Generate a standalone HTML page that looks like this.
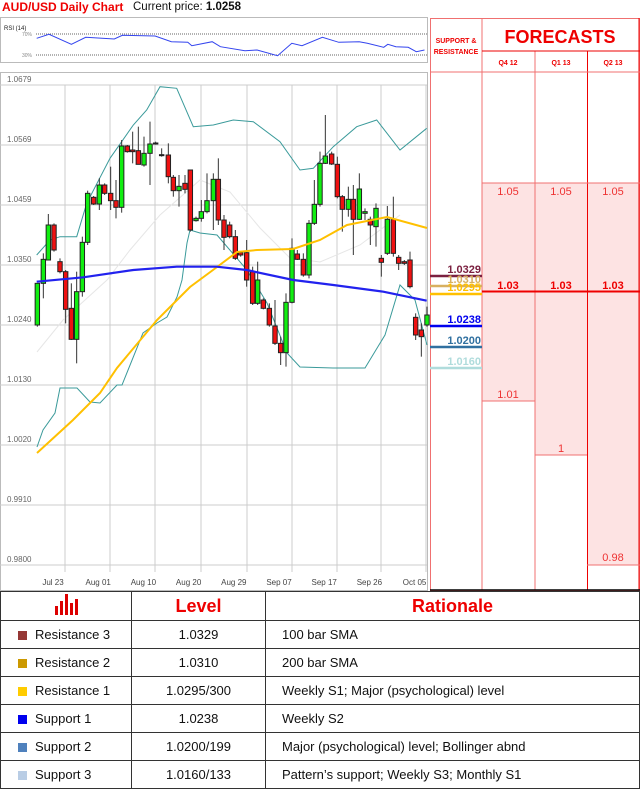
<!DOCTYPE html>
<html><head><meta charset="utf-8"><style>
body{margin:0;width:640px;height:788px;overflow:hidden;background:#fff;font-family:"Liberation Sans",sans-serif;position:relative}
.a{position:absolute}
table{border-collapse:collapse;position:absolute;left:0;top:591px;width:640px;table-layout:fixed}
td{border:1px solid #333;height:28px;padding:0;font-size:13px;color:#111;box-sizing:border-box}
th{border:1px solid #333;height:29px;padding:0;color:#e00;font-size:18px;font-weight:bold;box-sizing:border-box}
.sq{display:inline-block;width:9px;height:9px;margin:0 8px 0 17px;vertical-align:-1px}
</style></head><body>
<div class="a" style="left:2px;top:0;font-size:12px;font-weight:bold;color:#e00">AUD/USD Daily Chart</div>
<div class="a" style="left:133px;top:1px;font-size:11.5px;color:#111">Current price: <b>1.0258</b></div>
<svg id="s" class="a" style="left:0;top:0" width="640" height="592" xmlns="http://www.w3.org/2000/svg"></svg>
<table>
<colgroup><col style="width:131px"><col style="width:134px"><col></colgroup>
<tr><th><svg width="26" height="22"><g fill="#d00"><rect x="2" y="13" width="3" height="9"/><rect x="7" y="8" width="3" height="14"/><rect x="12" y="1" width="3" height="21"/><rect x="17" y="10" width="3" height="12"/><rect x="22" y="6" width="3" height="16"/></g></svg></th><th>Level</th><th>Rationale</th></tr>
<tr><td><span class="sq" style="background:#953735"></span>Resistance 3</td><td align="center">1.0329</td><td style="padding-left:16px">100 bar SMA</td></tr>
<tr><td><span class="sq" style="background:#cc9900"></span>Resistance 2</td><td align="center">1.0310</td><td style="padding-left:16px">200 bar SMA</td></tr>
<tr><td><span class="sq" style="background:#ffcc00"></span>Resistance 1</td><td align="center">1.0295/300</td><td style="padding-left:16px">Weekly S1; Major (psychological) level</td></tr>
<tr><td><span class="sq" style="background:#0000ee"></span>Support 1</td><td align="center">1.0238</td><td style="padding-left:16px">Weekly S2</td></tr>
<tr><td><span class="sq" style="background:#4f81bd"></span>Support 2</td><td align="center">1.0200/199</td><td style="padding-left:16px">Major (psychological) level; Bollinger abnd</td></tr>
<tr><td><span class="sq" style="background:#b9cde5"></span>Support 3</td><td align="center">1.0160/133</td><td style="padding-left:16px">Pattern’s support; Weekly S3; Monthly S1</td></tr>
</table>
<script>
var s='';
function L(x1,y1,x2,y2,c,w){s+='<line x1="'+x1+'" y1="'+y1+'" x2="'+x2+'" y2="'+y2+'" stroke="'+c+'" stroke-width="'+(w||1)+'"/>';}
function R(x,y,w,h,f,st){s+='<rect x="'+x+'" y="'+y+'" width="'+w+'" height="'+h+'" fill="'+f+'" '+(st?'stroke="'+st+'"':'')+'/>';}
function T(x,y,t,c,sz,a,b){s+='<text x="'+x+'" y="'+y+'" fill="'+c+'" font-size="'+sz+'" text-anchor="'+(a||'start')+'" font-weight="'+(b?'bold':'normal')+'" font-family="Liberation Sans">'+t+'</text>';}
function P(pts,c,w,sx,sy,ox,oy){var d=pts.map(function(p,i){return (i?'L':'M')+(p[0]/(sx||1)+(ox||0)).toFixed(1)+' '+(p[1]/(sy||1)+(oy||0)).toFixed(1)}).join(' ');s+='<path d="'+d+'" fill="none" stroke="'+c+'" stroke-width="'+w+'"/>';}
// RSI box
R(0.5,17.5,427,45,'#fff','#bbb');
T(4,30,'RSI (14)','#222',6);T(22,36,'70%','#888',5);T(22,57,'30%','#888',5);
s+='<line x1="36" y1="34" x2="427" y2="34" stroke="#666" stroke-dasharray="1,1"/><line x1="36" y1="55" x2="427" y2="55" stroke="#666" stroke-dasharray="1,1"/>';
P([[90,115],[120,103],[175,133],[210,112],[280,117],[300,106],[380,108],[420,125],[460,127],[470,137],[520,125],[540,140],[600,152],[630,150],[680,167],[715,130],[740,137],[790,112],[830,127],[880,125],[900,130],[940,142],[950,133],[970,140],[1000,142],[1020,155],[1040,150]],'#3344ee',1,2.45,3,0,0);
// main chart
R(0.5,72.5,427,518,'#fff','#bbb');
var lv=['1.0679','1.0569','1.0459','1.0350','1.0240','1.0130','1.0020','0.9910','0.9800'];
for(var i=0;i<9;i++){var y=85+i*60;L(0,y,427,y,'#ccc');T(7,y-3,lv[i],'#666',8);}
[65,110,155,201,247,292,337,381,426].forEach(function(x){L(x,85,x,572,'#ccc');});
var dl=['Jul 23','Aug 01','Aug 10','Aug 20','Aug 29','Sep 07','Sep 17','Sep 26','Oct 05'];
dl.forEach(function(d,i){T(53+i*45.2,585,d,'#444',8,'middle');});
P([[37,352],[63,320],[107,280],[130,250],[160,215],[200,180],[230,192],[260,228],[290,258],[320,262],[360,245],[400,215]],'#e6e6e6',1);
P([[110,555],[150,510],[180,500],[230,500],[260,400],[330,265],[400,165],[440,120],[480,50],[530,55],[580,170],[640,165],[700,150],[760,155],[840,215],[900,300],[940,295],[1000,230],[1070,170],[1130,150],[1200,240],[1280,175]],'#3a9a9a',1,3,3,0,70);
P([[37,447],[43,430],[55,413],[60,388],[77,388],[90,402],[100,403],[117,385],[122,385],[143,333],[157,323],[167,317],[177,297],[182,280],[187,243],[190,230],[200,233],[217,235],[247,270],[267,303],[287,353],[300,367],[333,368],[365,368],[385,335],[400,285],[415,300],[427,345]],'#3a9a9a',1);
var c=[[112,'g',640,765,640,770],[130,'g',568,640,550,685],[145,'g',465,570,432,570],[162,'r',465,540,460,545],[180,'r',575,605,565,610],[197,'r',605,718,600,760],[214,'r',715,808,640,810],[230,'g',665,808,605,880],[247,'g',517,665,500,680],[263,'g',370,517,362,525],[281,'r',382,402,378,405],[298,'g',345,402,325,420],[314,'r',345,370,340,375],[332,'r',370,392,290,420],[348,'r',392,412,330,445],[365,'g',228,412,210,428],[382,'r',228,245,225,248],[398,'r',240,245,185,280],[415,'r',242,283,170,283],[432,'g',250,285,200,290],[450,'g',222,250,155,345],[467,'g',219,222,215,224],[485,'g',254,256,235,260],[505,'r',255,320,220,340],[520,'r',322,362,315,380],[537,'g',349,362,315,410],[555,'r',340,358,315,370],[571,'r',300,480,300,485],[588,'g',445,452,440,455],[604,'g',425,445,390,455],[621,'g',392,425,310,430],[640,'g',328,392,310,480],[655,'r',328,450,265,465],[672,'r',450,502,435,540],[689,'r',465,500,455,505],[706,'r',500,565,480,570],[722,'r',548,555,545,560],[740,'r',548,630,510,650],[758,'r',605,700,590,705],[773,'g',630,700,575,705],[790,'r',690,715,685,718],[808,'r',715,765,700,770],[825,'r',768,820,690,825],[842,'r',820,848,800,885],[858,'g',697,848,670,890],[876,'g',535,697,505,700],[892,'r',552,568,540,570],[910,'r',568,615,550,620],[927,'g',460,615,450,625],[943,'g',403,460,330,465],[960,'g',280,403,245,410],[976,'g',258,280,135,282],[995,'r',252,282,245,285],[1012,'r',283,380,260,385],[1027,'r',380,418,375,485],[1045,'g',388,418,350,440],[1060,'r',388,448,345,555],[1078,'g',357,448,310,450],[1095,'g',425,430,415,450],[1111,'r',448,465,440,525],[1128,'g',415,470,400,530],[1144,'r',565,577,555,620],[1162,'g',448,550,408,555],[1180,'r',448,550,380,560],[1196,'r',562,580,555,600],[1213,'r',575,580,570,585],[1230,'r',570,650,545,655],[1247,'r',742,795,730,810],[1264,'r',780,800,760,860],[1281,'g',735,765,710,770]];
c.forEach(function(k){var x=k[0]/3,t=k[2]/3+70,b=k[3]/3+70;L(x,k[4]/3+70,x,k[5]/3+70,'#333');R(x-2.2,t,4.4,Math.max(b-t,1),k[1]=='g'?'#11ee11':'#ee1111','#222');});
P([[37,453],[73,420],[100,393],[117,368],[157,320],[190,287],[213,270],[237,252],[257,250],[293,249],[320,240],[347,225],[387,217],[427,228]],'#ffc000',2);
P([[110,635],[250,622],[400,600],[530,590],[650,590],[740,600],[880,630],[1000,645],[1150,665],[1280,692]],'#2222ee',2.2,3,3,0,70);
var pk='#fde3e3',bd='#f07070';
R(482,183,53,218,pk);R(535,183,52,272,pk);R(587,183,52,382,pk);
s+='<rect x="430.5" y="18.5" width="209" height="572" fill="none" stroke="'+bd+'"/>';
L(482,18,482,590,bd);L(535,51,535,590,bd);L(587.5,51,587.5,590,'#e00');L(639,18,639,590,'#e00');
L(482,51,640,51,'#e00');L(430,72,640,72,bd);L(482,183,640,183,bd);
L(482,401,535,401,bd);L(535,455,587,455,bd);L(587,565,640,565,bd);L(430,590,640,590,'#000',1.5);
T(456,43,'SUPPORT &amp;','#e00',7,'middle',1);T(456,54,'RESISTANCE','#e00',7,'middle',1);
T(560,43,'FORECASTS','#ee0000',18,'middle',1);
T(508,65,'Q4 12','#e00',7,'middle',1);T(561,65,'Q1 13','#e00',7,'middle',1);T(613,65,'Q2 13','#e00',7,'middle',1);
[508,561,613].forEach(function(x){T(x,195,'1.05','#e33',11,'middle');T(x,289,'1.03','#e00',11,'middle',1);});
L(482,291.5,640,291.5,'#e00',2);
T(508,398,'1.01','#e33',11,'middle');T(561,452,'1','#e33',11,'middle');T(613,561,'0.98','#e33',11,'middle');
var sr=[[276,'#7b2040','1.0329'],[286,'#d8b060','1.0310'],[294,'#ffc000','1.0295'],[326,'#0000ee','1.0238'],[347,'#3070a0','1.0200'],[368,'#b0dcdc','1.0160']];
sr.forEach(function(k){L(430,k[0],482,k[0],k[1],2.5);T(481,k[0]-3,k[2],k[1],11,'end',1);});
document.getElementById('s').innerHTML=s;
</script>
</body></html>
